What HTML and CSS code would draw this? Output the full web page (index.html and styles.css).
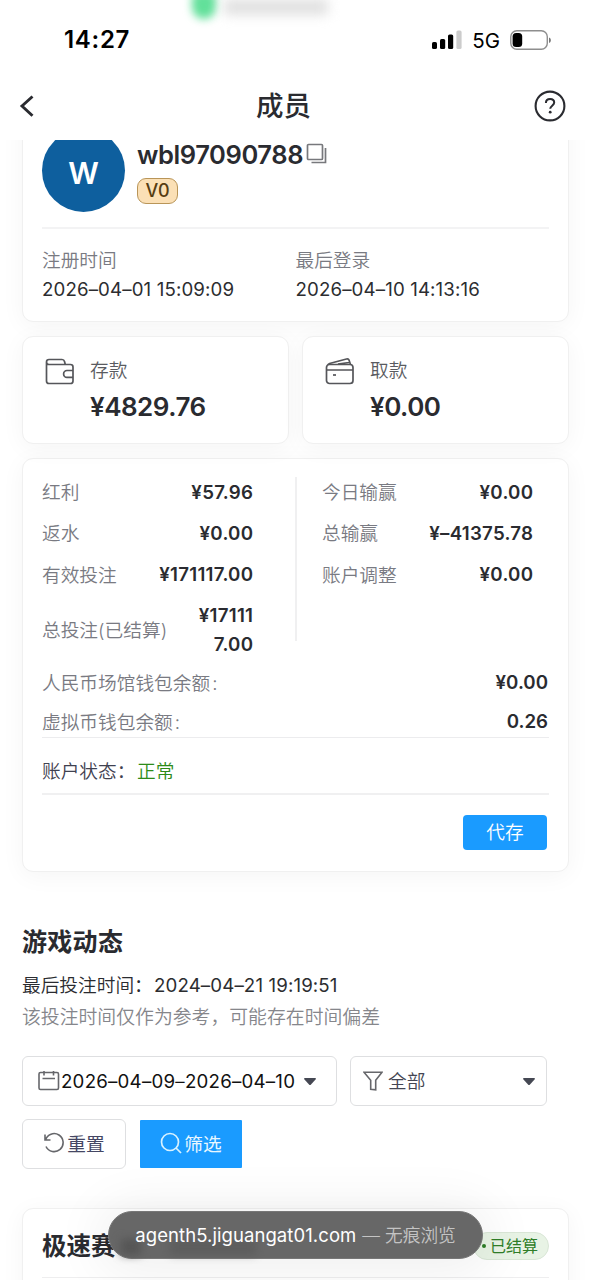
FILE: index.html
```html
<!DOCTYPE html>
<html lang="zh-CN">
<head>
<meta charset="utf-8">
<title>成员</title>
<link rel="stylesheet" href="styles.css">
</head>
<body>
<div class="screen">
  <header class="top">
    <div class="banner"><i class="banner-dot"></i><i class="banner-text"></i></div>
    <div class="status">
      <span class="clock">14:27</span>
      <div class="signals">
        <svg class="bars" width="30" height="20" viewBox="0 0 30 20"><rect x="0" y="12" width="5" height="7" rx="1.6"/><rect x="8" y="9" width="5.2" height="10" rx="1.6"/><rect x="16" y="4.5" width="5.2" height="14.500" rx="1.6"/><rect x="24.400" y="0.500" width="5.200" height="18.500" rx="1.6" fill="#ccc"/></svg>
        <span class="net">5G</span>
        <svg class="battery" width="42" height="20" viewBox="0 0 42 20"><rect x=".8" y=".8" width="36.500" height="18.400" rx="6" fill="none" stroke="#8e8e8e" stroke-width="1.4"/><rect x="2.600" y="3" width="9.600" height="14" rx="3.500"/><path d="M39 7.500v5.500c2.500-.8 2.500-4.700 0-5.500z" fill="#777"/></svg>
      </div>
    </div>
    <nav class="nav">
      <svg width="24" height="32" viewBox="0 0 24 32"><path d="M16.500 6.500 6 16l10.500 9.800" fill="none" stroke="#2a2b30" stroke-width="2.900"/></svg>
      <h1>成员</h1>
      <svg width="34" height="34" viewBox="0 0 34 34"><circle cx="17" cy="17" r="14.400" fill="none" stroke="#2a2b30" stroke-width="2.100"/><path d="M12.900 13.900c0-2.500 1.700-3.900 4.200-3.900s4.100 1.500 4.100 3.600c0 3-4 3.200-4 6.200" fill="none" stroke="#2a2b30" stroke-width="2"/><circle cx="17.200" cy="23.200" r="1.400" fill="#2a2b30"/></svg>
    </nav>
  </header>
  <main class="content">
    <section class="card profile">
      <div class="person">
        <div class="avatar">W</div>
        <div>
          <div class="name-row"><span class="name">wbl97090788</span>
            <svg width="22" height="22" viewBox="0 0 22 22" fill="none" stroke="#77787c" stroke-width="1.700"><rect x="1.500" y="1.500" width="15" height="15" rx="1"/><path d="M19.500 5v14.500H5.500"/></svg></div>
          <span class="level">V0</span>
        </div>
      </div>
      <div class="dates">
        <div><p class="label">注册时间</p><p class="date">2026–04–01 15:09:09</p></div>
        <div><p class="label">最后登录</p><p class="date">2026–04–10 14:13:16</p></div>
      </div>
    </section>
    <div class="money">
      <section class="card money-card">
        <svg width="30" height="30" viewBox="0 0 30 30" fill="none" stroke="#55565a" stroke-width="1.700"><path d="M1.500 6V25q0 2.500 2.500 2.500h21.500q2.500 0 2.500-2.500V11q0-2.500-2.500-2.500H4Q1.500 8.500 1.500 6q0-2.500 2.500-2.500h13q2 0 2.500 2l.8 3M28 14.500h-6a3.400 3.400 0 0 0 0 6.800h6"/></svg>
        <div><p class="money-label">存款</p><p class="amount">¥4829.76</p></div>
      </section>
      <section class="card money-card">
        <svg width="30" height="30" viewBox="0 0 30 30" fill="none" stroke="#55565a" stroke-width="1.700"><rect x="1.500" y="8.500" width="26.500" height="19" rx="3"/><path d="M1.500 14H28M3 9q0-1 1.500-1.500L21.500 3q2-.5 2.500 1l1.500 4.500M13 8.200 24 6.500"/><path d="M8 19h3"/></svg>
        <div><p class="money-label">取款</p><p class="amount">¥0.00</p></div>
      </section>
    </div>
    <section class="card account">
      <div class="stats">
        <dl>
          <div><dt>红利</dt><dd>¥57.96</dd></div>
          <div><dt>返水</dt><dd>¥0.00</dd></div>
          <div><dt>有效投注</dt><dd>¥171117.00</dd></div>
          <div><dt>总投注(已结算)</dt><dd>¥17111<br>7.00</dd></div>
        </dl>
        <i class="rule"></i>
        <dl>
          <div><dt>今日输赢</dt><dd>¥0.00</dd></div>
          <div><dt>总输赢</dt><dd>¥–41375.78</dd></div>
          <div><dt>账户调整</dt><dd>¥0.00</dd></div>
        </dl>
      </div>
      <div class="wallet"><span>人民币场馆钱包余额<i class="colon">:</i></span><b>¥0.00</b></div>
      <div class="wallet last"><span>虚拟币钱包余额<i class="colon">:</i></span><b>0.26</b></div>
      <div class="state"><span class="state-label">账户状态：</span><em>正常</em></div>
      <div class="actions"><button class="deposit">代存</button></div>
    </section>
    <section class="activity">
      <h2>游戏动态</h2>
      <p class="last-bet"><span>最后投注时间：</span><span class="date">2024–04–21 19:19:51</span></p>
      <p class="hint">该投注时间仅作为参考，可能存在时间偏差</p>
      <div class="filters">
        <div class="field range">
          <svg width="22" height="20" viewBox="0 0 22 20" fill="none" stroke="#66676b" stroke-width="1.600"><rect x="1" y="1.500" width="19.500" height="17" rx="1.500"/><path d="M6 0v4.500M15.500 0v4.500M4.500 7.500h12.500"/></svg>
          <span class="range-text">2026–04–09<i>–</i>2026–04–10</span>
          <svg class="caret" width="12" height="7" viewBox="0 0 12 7"><path d="M0 1q0-1 1-1h10q1 0 1 1L7 6.500q-1 1-2 0z"/></svg>
        </div>
        <div class="field kind">
          <svg width="20" height="20" viewBox="0 0 20 20" fill="none" stroke="#66676b" stroke-width="1.600"><path d="M1 1.200h18l-6.300 8v9.600l-5-.6V9.200z"/></svg>
          <span>全部</span>
          <svg class="caret" width="12" height="7" viewBox="0 0 12 7"><path d="M0 1q0-1 1-1h10q1 0 1 1L7 6.500q-1 1-2 0z"/></svg>
        </div>
      </div>
      <div class="buttons">
        <button class="field reset"><svg width="22" height="22" viewBox="0 0 22 22" fill="none" stroke="#66676b" stroke-width="1.600"><path d="M2 2.500V8h5.500M2.500 8A9 9 0 1 1 3 14.500"/></svg>重置</button>
        <button class="search"><svg width="22" height="22" viewBox="0 0 22 22" fill="none" stroke="#d9f2ff" stroke-width="1.700"><circle cx="10" cy="10" r="8.500"/><path d="m16 16 5 5"/></svg>筛选</button>
      </div>
    </section>
    <section class="card game">
      <div class="game-head"><h3>极速赛</h3><span class="settled"><i></i>已结算</span></div>
    </section>
  </main>
  <div class="address"><i class="ghost ghost-a"></i><i class="ghost ghost-b"></i><span class="host">agenth5.jiguangat01.com</span><span class="mode"><i>—</i> 无痕浏览</span></div>
</div>
</body>
</html>
```
FILE: styles.css
```css
* { box-sizing: border-box; }
body, h1, h2, h3, p, dl, dd { margin: 0; }
body { background: #fff; }
i, em { font-style: normal; }
svg { display: block; flex: none; }
button { font: inherit; border: 0; padding: 0; }
.screen {
  position: relative; width: 591px; height: 1280px; overflow: hidden;
  display: flex; flex-direction: column;
  font: 350 18.7px/29px Inter, "Noto Sans CJK SC", sans-serif; color: #2a2b30;
}
.top { height: 140px; flex: none; position: relative; }
.banner { position: absolute; left: 192px; top: -8px; display: flex; gap: 8px; }
.banner-dot { width: 24px; height: 27px; border-radius: 6px 6px 12px 12px; background: #62e09a; filter: blur(4px); }
.banner-text { width: 104px; height: 16px; margin-top: 7px; background: #e0e0e0; filter: blur(6px); }
.status { height: 78px; display: flex; justify-content: space-between; padding: 0 39px 0 64px; align-items: center; color: #000; }
.clock { font-weight: 600; font-size: 24px; letter-spacing: .7px; padding-top: 1px; }
.signals { display: flex; align-items: center; padding-top: 1px; }
.net { font-weight: 400; font-size: 20.5px; margin: 1px 10px 0 10px; letter-spacing: 0; }
.nav { display: flex; align-items: center; justify-content: space-between; padding: 2px 24px 0 16px; height: 54px; }
.nav h1 { font-size: 27.5px; font-weight: 500; line-height: 40px; margin-right: 6px; }
.content { flex: 1; overflow: hidden; padding: 0 22px; }
.card { background: #fff; border: 1px solid #f0f0f0; border-radius: 11px; box-shadow: 0 4px 24px rgba(0,0,0,.045); }
.profile { margin-top: -40px; height: 222px; padding: 28px 19px 0; }
.person { display: flex; gap: 12px; height: 100px; border-bottom: 2px solid #f3f3f4; }
.avatar { width: 83px; height: 83px; border-radius: 50%; background: #0e5f9e; color: #fff; font-weight: 600; font-size: 30px; display: grid; place-items: center; padding-top: 6px; }
.name-row { display: flex; align-items: center; gap: 3px; height: 34px; margin-top: 8px; }
.name { font-size: 25.5px; font-weight: 600; letter-spacing: -.4px; }
.level { display: block; width: 41px; height: 26px; margin-top: 7px; border: 1.5px solid #b99558; border-radius: 9px; background: #fbe0b6; color: #563d12; font: 500 18px/24px Inter, sans-serif; text-align: center; }
.dates { display: grid; grid-template-columns: 1fr 1fr; padding-top: 17px; }
.label, dt, .wallet span { color: #797a82; }
.date { font-weight: 370; font-size: 18.7px; letter-spacing: .12px; color: #2c2d30; }
.money { display: grid; grid-template-columns: 1fr 1fr; gap: 13px; margin: 14px 0; }
.money-card { height: 108px; padding: 19px 22px; display: flex; gap: 15px; }
.money-label { color: #5a5b61; }
.amount { font-weight: 600; font-size: 26px; line-height: 43px; letter-spacing: -.5px; }
.account { height: 414px; padding: 18px 19px 0; }
.stats { display: grid; grid-template-columns: 211px 2px 211px; justify-content: start; column-gap: 42px; height: 182px; }
.stats dl:last-child { margin-left: -17px; margin-right: 17px; }
.rule { height: 164px; background: #f0f0f1; }
dl { display: flex; flex-direction: column; gap: 12.3px; }
dl > div { display: flex; justify-content: space-between; align-items: center; }
dt { padding-top: 1px; margin-bottom: -1px; }
dd, .wallet b { font-weight: 600; font-size: 18.7px; text-align: right; }
dd { letter-spacing: .25px; margin-right: -.25px; padding-top: .6px; margin-bottom: -.6px; }
.wallet { display: flex; justify-content: space-between; margin-top: 9px; height: 29px; padding-right: 1px; }
.wallet span { padding-top: 1px; }
.wallet.last { margin-top: 10px; height: 31px; border-bottom: 1px solid #ececee; }
.colon { margin-left: 2px; }
.state { height: 57px; padding-top: 19px; border-bottom: 2px solid #f0f0f1; display: flex; }
.state-label { color: #3f4150; width: 95px; }
.state em { color: #2d8b18; }
.actions { display: flex; justify-content: flex-end; padding: 20px 2px 0; }
.deposit { width: 84px; height: 35px; border-radius: 4px; background: #1a9bff; color: #fff; font-weight: 350; line-height: 36px; }
.activity { padding-top: 52px; height: 336px; }
h2 { font-size: 25px; line-height: 36px; font-weight: 700; letter-spacing: .3px; }
.last-bet { display: flex; margin-top: 11px; height: 29px; }
.last-bet span:first-child { width: 132px; white-space: nowrap; }
.hint { margin-top: 3px; color: #85868b; height: 29px; font-size: 18.85px; }
.filters { display: flex; gap: 13px; margin-top: 24px; }
.field { height: 50px; border: 1.5px solid #dedfe1; border-radius: 6px; background: #fff; display: flex; align-items: center; }
.range { width: 315px; padding: 0 0 0 15px; }
.range-text { font-size: 18.7px; font-weight: 400; color: #111; margin-left: 1px; letter-spacing: .22px; width: 243px; white-space: nowrap; }
.range-text i { font-weight: 300; }
.kind { width: 197px; padding: 0 11px 0 12px; gap: 5px; color: #444653; font-weight: 350; }
.caret { fill: #454853; }
.kind .caret { margin-left: auto; }
.buttons { display: flex; gap: 14px; margin-top: 13px; }
.reset { width: 104px; justify-content: center; gap: 2px; color: #444663; font-weight: 400; }
.search { width: 102px; height: 48px; margin-top: 1px; background: #1a9bff; color: #e9f7ff; display: flex; align-items: center; justify-content: center; gap: 2px; font-weight: 400; border-radius: 1px; }
.reset svg, .search svg { margin-top: -3px; }
.game { height: 150px; padding: 18px 19px 0; }
.game-head { display: flex; justify-content: space-between; align-items: center; height: 51px; padding-bottom: 12px; border-bottom: 1.5px solid #eeeeef; }
h3 { font-size: 24.5px; font-weight: 700; line-height: 38px; }
.settled { display: flex; align-items: center; justify-content: flex-end; gap: 4px; width: 76px; height: 28px; padding-right: 10px; border: 1px solid #d9e6d6; border-radius: 14px; background: #e8f3e5; color: #2f7e28; font-size: 16px; font-weight: 400; }
.settled i { width: 4px; height: 4px; border-radius: 50%; background: #2f7e28; }
.address { position: absolute; left: 108px; top: 1211px; width: 375px; height: 48px; border-radius: 24px; border: 1px solid #777; background: #676767; box-shadow: 0 4px 50px 12px rgba(0,0,0,.06); display: flex; align-items: center; justify-content: center; white-space: nowrap; }
.ghost { position: absolute; background: #555; filter: blur(4px); top: 27px; height: 16px; }
.ghost-a { left: 12px; width: 20px; }
.ghost-b { left: 61px; width: 86px; opacity: .55; }
.host { position: relative; color: #fff; font-weight: 400; font-size: 18.5px; letter-spacing: .08px; }
.mode { position: relative; color: #c4c4c4; font-weight: 350; font-size: 17.7px; margin-left: 6px; }
```
